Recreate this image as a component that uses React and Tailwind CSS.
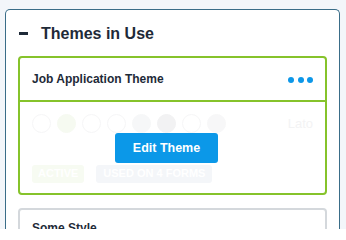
import React from 'react';

const swatches = [
  'bg-white border border-[#f6f6f7]',
  'bg-[#f6faf1] border border-[#f6faf1]',
  'bg-white border border-[#f6f6f7]',
  'bg-white border border-[#f6f6f7]',
  'bg-[#f6f7f8] border border-[#f6f7f8]',
  'bg-[#f2f2f3] border border-[#f2f2f3]',
  'bg-white border border-[#f6f6f7]',
  'bg-[#f7f7f8] border border-[#f7f7f8]',
];

const App = () => {
  return (
    <div className="h-[229px] overflow-hidden bg-[#f3f6fa] pl-[5px] pr-[6px] pt-[9px] font-['Liberation_Sans',Arial,sans-serif] text-[#1e2a38]">
      <div className="h-[240px] rounded-t-[5px] border border-b-0 border-[#3a6d88] bg-white px-[12px]">
        {/* header */}
        <div className="flex items-center h-[46px] pt-[1px]">
          <span className="block w-[9px] h-[3px] bg-[#1e2a38] ml-[1px]" />
          <h2 className="ml-[13px] text-[16px] font-bold leading-none">Themes in Use</h2>
        </div>

        {/* active theme card */}
        <div className="rounded-[4px] border-2 border-[#86c32b]">
          <div className="flex items-center justify-between h-[44px] px-[12px] border-b-2 border-[#86c32b]">
            <span className="text-[12px] font-bold -mt-[1px]">Job Application Theme</span>
            <div className="flex gap-[3.5px] mt-[2px]">
              <span className="w-[6px] h-[6px] rounded-full bg-[#0d97e8]" />
              <span className="w-[6px] h-[6px] rounded-full bg-[#0d97e8]" />
              <span className="w-[6px] h-[6px] rounded-full bg-[#0d97e8]" />
            </div>
          </div>
          <div className="relative h-[91px] px-[12px] pt-[12px]">
            <div className="flex items-center justify-between">
              <div className="flex gap-[6px]">
                {swatches.map((c, i) => (
                  <span key={i} className={`w-[19px] h-[19px] rounded-full ${c}`} />
                ))}
              </div>
              <span className="text-[13px] text-[#f3f3f4]">Lato</span>
            </div>
            <div className="flex gap-[12px] mt-[31px]">
              <span className="h-[18px] px-[6px] flex items-center rounded-[3px] bg-[#f7fbf2] text-white text-[11px] font-bold">ACTIVE</span>
              <span className="h-[18px] px-[7px] flex items-center rounded-[3px] bg-[#f4f6f9] text-white text-[11px] font-bold">USED ON 4 FORMS</span>
            </div>
            <button className="absolute left-[95px] top-[31px] w-[103px] h-[30px] rounded-[3px] bg-[#0b98e8] text-white text-[12.5px] font-bold">
              Edit Theme
            </button>
          </div>
        </div>

        {/* next theme card */}
        <div className="mt-[13px] rounded-[4px] border-2 border-[#d4d8dc] h-[60px] px-[12px] pt-[11px]">
          <span className="block text-[12px] leading-[14px] font-bold">Some Style</span>
        </div>
      </div>
    </div>
  );
};

export default App;
